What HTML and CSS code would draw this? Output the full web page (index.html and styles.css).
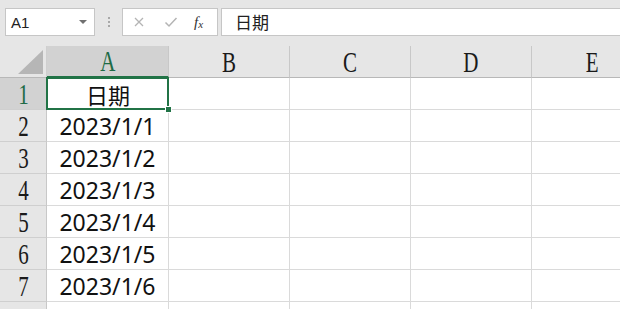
FILE: index.html
```html
<!DOCTYPE html>
<html lang="zh-CN">
<head>
  <meta charset="UTF-8">
  <title>sheet</title>
  <link rel="stylesheet" href="styles.css">
</head>
<body>
  <div class="app">
    <div class="toolbar">
      <div class="namebox">
        <span class="ref">A1</span>
        <span class="drop"></span>
      </div>
      <div class="sep"><i></i><i></i><i></i></div>
      <div class="fbtns">
        <svg class="ico" width="12" height="12" viewBox="0 0 12 12"><path d="M2 2 L10 10 M10 2 L2 10" stroke="#b4b4b4" stroke-width="1.3" fill="none"/></svg>
        <svg class="ico" width="14" height="12" viewBox="0 0 14 12"><path d="M1.5 6.5 L5 10 L12.5 2" stroke="#b4b4b4" stroke-width="1.5" fill="none"/></svg>
        <span class="fx">f<sub>x</sub></span>
      </div>
      <div class="finput">日期</div>
    </div>

    <div class="grid">
      <div class="corner"><span class="tri"></span></div>
      <div class="colhead on"><span>A</span></div>
      <div class="colhead"><span>B</span></div>
      <div class="colhead"><span>C</span></div>
      <div class="colhead"><span>D</span></div>
      <div class="colhead"><span>E</span></div>

      <div class="rowhead on"><span>1</span></div>
      <div class="cell active cjk">日期</div>
      <div class="cell"></div><div class="cell"></div><div class="cell"></div><div class="cell"></div>

      <div class="rowhead"><span>2</span></div>
      <div class="cell">2023/1/1</div>
      <div class="cell"></div><div class="cell"></div><div class="cell"></div><div class="cell"></div>

      <div class="rowhead"><span>3</span></div>
      <div class="cell">2023/1/2</div>
      <div class="cell"></div><div class="cell"></div><div class="cell"></div><div class="cell"></div>

      <div class="rowhead"><span>4</span></div>
      <div class="cell">2023/1/3</div>
      <div class="cell"></div><div class="cell"></div><div class="cell"></div><div class="cell"></div>

      <div class="rowhead"><span>5</span></div>
      <div class="cell">2023/1/4</div>
      <div class="cell"></div><div class="cell"></div><div class="cell"></div><div class="cell"></div>

      <div class="rowhead"><span>6</span></div>
      <div class="cell">2023/1/5</div>
      <div class="cell"></div><div class="cell"></div><div class="cell"></div><div class="cell"></div>

      <div class="rowhead"><span>7</span></div>
      <div class="cell">2023/1/6</div>
      <div class="cell"></div><div class="cell"></div><div class="cell"></div><div class="cell"></div>

      <div class="rowhead"><span>8</span></div>
      <div class="cell"></div>
      <div class="cell"></div><div class="cell"></div><div class="cell"></div><div class="cell"></div>
    </div>
  </div>
</body>
</html>
```

FILE: styles.css
```css
  html, body{
    margin: 0;
    padding: 0;
    background-color: #fff;
  }
  .app{
    width: 620px;
    height: 309px;
    overflow: hidden;
    font-family: "Noto Sans", "Noto Sans CJK SC", sans-serif;
    color: #111;
  }

  .toolbar{
    height: 46px;
    box-sizing: border-box;
    padding: 8px 0 0 5px;
    background-color: #e6e6e6;
    display: flex;
    align-items: flex-start;
  }
  .namebox{
    width: 90px;
    height: 28px;
    box-sizing: border-box;
    background-color: #fff;
    border: 1px solid #c6c6c6;
    display: flex;
    align-items: center;
    padding: 0 7px 0 5px;
  }
  .namebox .ref{
    font-family: "Liberation Sans", sans-serif;
    font-size: 15px;
    color: #222;
  }
  .namebox .drop{
    margin-left: auto;
    width: 0;
    height: 0;
    border-left: 4px solid transparent;
    border-right: 4px solid transparent;
    border-top: 4px solid #707070;
  }
  .sep{
    width: 27px;
    height: 28px;
    display: flex;
    flex-direction: column;
    justify-content: center;
    align-items: center;
    gap: 2px;
  }
  .sep i{
    display: block;
    width: 2px;
    height: 2px;
    background-color: #a8a8a8;
  }
  .fbtns{
    width: 96px;
    height: 28px;
    box-sizing: border-box;
    background-color: #fff;
    border: 1px solid #c6c6c6;
    display: flex;
    align-items: center;
    padding-left: 10px;
  }
  .fbtns .ico{
    margin-right: 19px;
  }
  .fbtns .ico + .ico{
    margin-right: 16px;
  }
  .fbtns .fx{
    font-family: "Liberation Serif", serif;
    font-style: italic;
    font-size: 15px;
    color: #333;
  }
  .fbtns .fx sub{
    font-size: 11px;
    vertical-align: -1px;
  }
  .finput{
    flex: 1;
    margin-left: 3px;
    height: 28px;
    box-sizing: border-box;
    background-color: #fff;
    border: 1px solid #c6c6c6;
    border-right: 0;
    padding-left: 13px;
    font-family: "Noto Sans CJK SC", sans-serif;
    font-size: 17px;
    line-height: 26px;
    color: #222;
  }

  .grid{
    display: grid;
    grid-template-columns: 47px 122px 121px 121px 121px 121px;
    grid-auto-rows: 32px;
    width: 653px;
  }
  .corner{
    position: relative;
    background-color: #e6e6e6;
    border-right: 1px solid #cfcfcf;
    border-bottom: 1px solid #b8b8b8;
  }
  .corner .tri{
    position: absolute;
    right: 3px;
    bottom: 3px;
    width: 0;
    height: 0;
    border-left: 25px solid transparent;
    border-bottom: 24px solid #b6b6b6;
  }
  .colhead,
  .rowhead{
    box-sizing: border-box;
    background-color: #e6e6e6;
    display: flex;
    justify-content: center;
    align-items: center;
    font-family: "Liberation Serif", serif;
    font-size: 30px;
    line-height: 1;
    color: #1a1a1a;
  }
  .colhead{
    border-right: 1px solid #c8c8c8;
    border-bottom: 1px solid #b8b8b8;
  }
  .rowhead{
    border-right: 1px solid #c8c8c8;
    border-bottom: 1px solid #cfcfcf;
  }
  .colhead span,
  .rowhead span{
    display: inline-block;
    transform: scaleX(0.7);
  }
  .colhead.on,
  .rowhead.on{
    background-color: #d2d2d2;
    color: #1e6b46;
  }
  .colhead.on{
    border-bottom: 2px solid #217346;
  }

  .cell{
    box-sizing: border-box;
    border-right: 1px solid #dadada;
    border-bottom: 1px solid #dadada;
    display: flex;
    justify-content: center;
    align-items: center;
    font-size: 23px;
    color: #111;
    white-space: nowrap;
  }
  .cell.cjk{
    font-family: "Noto Sans CJK SC", sans-serif;
    font-size: 22px;
  }
  .cell.active{
    position: relative;
    border: 0;
  }
  .cell.active::before{
    content: '';
    position: absolute;
    left: -1px;
    top: -1px;
    right: 0;
    bottom: 0;
    border: 2px solid #217346;
  }
  .cell.active::after{
    content: '';
    position: absolute;
    right: -3px;
    bottom: -3px;
    width: 5px;
    height: 5px;
    background-color: #217346;
    border: 1px solid #fff;
  }
```
